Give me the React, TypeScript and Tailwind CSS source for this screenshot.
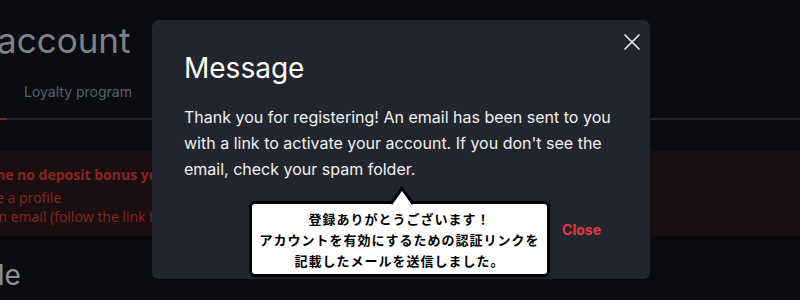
import { X } from "lucide-react";

export default function App() {
  return (
    <div className="relative w-[800px] h-[300px] overflow-hidden bg-[#0b0c10] font-['Inter',sans-serif]">
      {/* page behind the overlay */}
      <div className="flex flex-col">
        <h1 className="-ml-[3px] mt-[18px] text-[35px] leading-[44px] text-[#808186]">account</h1>
        <div className="mt-[20px] flex">
          <span className="ml-[24px] text-[14px] leading-[20px] text-[#5a606c]">Loyalty program</span>
        </div>
        <div className="mt-[16px] flex h-[2px] bg-[#222328]">
          <div className="w-[7px] bg-[#7a2326]" />
        </div>
        <div className="mt-[31px] h-[85px] bg-[#1a0e11] pt-[14px] font-['Open_Sans',sans-serif] text-[#8a2424]">
          <p className="-ml-[4px] text-[14px] font-bold leading-[20px]">he no deposit bonus you</p>
          <p className="-ml-[4px] mt-[3px] text-[14px] leading-[19px]">e a profile</p>
          <p className="-ml-[5px] text-[14px] leading-[19px]">in email (follow the link in</p>
        </div>
        <h2 className="-ml-[9px] mt-[22px] text-[28px] leading-[34px] text-[#8d8f93]">
          <span className="text-[#8a1f22]">l</span>le
        </h2>
      </div>

      {/* modal */}
      <div className="absolute left-[152px] top-[20px] w-[498px] h-[259px] rounded-[7px] bg-[#22252d] px-[32px] pt-[30px]">
        <button className="absolute right-[4px] top-[8px] text-[#e4e5e8]">
          <X size={28} strokeWidth={1.5} />
        </button>
        <h3 className="text-[28px] leading-[36px] text-white">Message</h3>
        <p className="mt-[18px] text-[16px] leading-[26px] text-[#f1f2f4]">
          Thank you for registering! An email has been sent to you with a link to activate your account. If you don't see the email, check your spam folder.
        </p>
        <div className="mt-[38px] flex justify-end pr-[17px]">
          <button className="text-[14px] font-bold leading-[20px] text-[#e3383d]">Close</button>
        </div>
      </div>

      {/* annotation bubble */}
      <div className="absolute left-[249px] top-[201px] w-[301px] h-[76px] rounded-[6px] border-[3px] border-black bg-white flex items-center justify-center">
        <svg className="absolute left-[139px] -top-[17px]" width="22" height="18" viewBox="0 0 22 18">
          <path d="M0 17 L11 1.5 L22 17" fill="#ffffff" stroke="#000000" strokeWidth="3" strokeLinejoin="miter" />
        </svg>
        <p className="text-center text-[13px] font-bold leading-[21px] tracking-[1px] text-black font-['Noto_Sans_CJK_JP',sans-serif]">
          登録ありがとうございます！<br />
          アカウントを有効にするための認証リンクを<br />
          記載したメールを送信しました。
        </p>
      </div>
    </div>
  );
}
